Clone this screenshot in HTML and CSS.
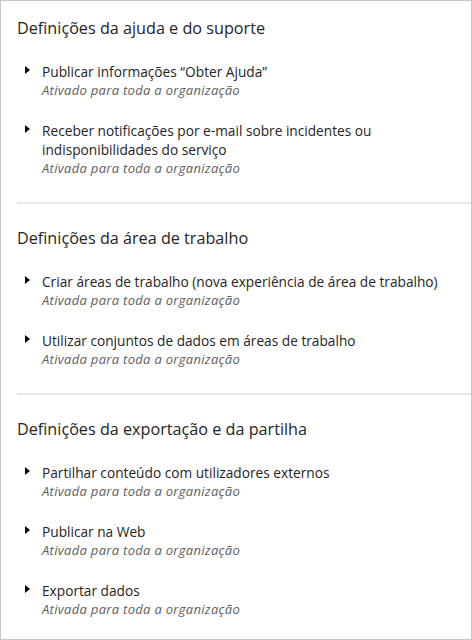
FILE: index.html
```html
<!DOCTYPE html>
<html lang="pt">
<head>
<meta charset="utf-8">
<link rel="stylesheet" href="styles.css">
</head>
<body>
<div class="panel">
  <section class="group">
    <h2 class="group-title">Definições da ajuda e do suporte</h2>
    <div class="item">
      <span class="caret"></span>
      <div class="item-body">
        <div class="item-title">Publicar informações “Obter Ajuda”</div>
        <div class="item-sub">Ativado para toda a organização</div>
      </div>
    </div>
    <div class="item">
      <span class="caret"></span>
      <div class="item-body">
        <div class="item-title">Receber notificações por e-mail sobre incidentes ou indisponibilidades do serviço</div>
        <div class="item-sub">Ativada para toda a organização</div>
      </div>
    </div>
  </section>
  <section class="group">
    <h2 class="group-title">Definições da área de trabalho</h2>
    <div class="item">
      <span class="caret"></span>
      <div class="item-body">
        <div class="item-title">Criar áreas de trabalho (nova experiência de área de trabalho)</div>
        <div class="item-sub">Ativada para toda a organização</div>
      </div>
    </div>
    <div class="item">
      <span class="caret"></span>
      <div class="item-body">
        <div class="item-title">Utilizar conjuntos de dados em áreas de trabalho</div>
        <div class="item-sub">Ativada para toda a organização</div>
      </div>
    </div>
  </section>
  <section class="group">
    <h2 class="group-title">Definições da exportação e da partilha</h2>
    <div class="item">
      <span class="caret"></span>
      <div class="item-body">
        <div class="item-title">Partilhar conteúdo com utilizadores externos</div>
        <div class="item-sub">Ativada para toda a organização</div>
      </div>
    </div>
    <div class="item">
      <span class="caret"></span>
      <div class="item-body">
        <div class="item-title">Publicar na Web</div>
        <div class="item-sub">Ativada para toda a organização</div>
      </div>
    </div>
    <div class="item">
      <span class="caret"></span>
      <div class="item-body">
        <div class="item-title">Exportar dados</div>
        <div class="item-sub">Ativada para toda a organização</div>
      </div>
    </div>
  </section>
</div>
</body>
</html>
```

FILE: styles.css
```css
html, body {
  margin: 0;
  padding: 0;
  background: #ffffff;
}
body {
  font-family: "Open Sans", "Noto Sans", sans-serif;
  color: #252423;
}
.panel {
  box-sizing: border-box;
  width: 472px;
  height: 640px;
  border: 1px solid #c6c6c6;
  padding: 0 0 0 16px;
  overflow: hidden;
}
.group {
  border-bottom: 2px solid #e8e8e8;
  padding: 22px 0 25px 0;
}
.group:first-child {
  padding-top: 15px;
}
.group:last-child {
  border-bottom: none;
}
.group-title {
  margin: 0 0 22px 0;
  font-size: 16.2px;
  font-weight: 400;
  line-height: 24px;
  color: #252423;
}
.item {
  display: flex;
  align-items: flex-start;
  padding-left: 8px;
  margin-bottom: 22px;
}
.item:last-child {
  margin-bottom: 0;
}
.caret {
  flex: none;
  width: 0;
  height: 0;
  margin-top: 4px;
  margin-right: 12px;
  border-top: 4px solid transparent;
  border-bottom: 4px solid transparent;
  border-left: 5px solid #000000;
}
.item-body {
  flex: 1;
  padding-right: 20px;
}
.item-title {
  font-size: 13.7px;
  line-height: 19px;
  color: #252423;
}
.item-sub {
  font-size: 13px;
  line-height: 18px;
  font-style: italic;
  letter-spacing: 0.3px;
  color: #605e5c;
}
```
